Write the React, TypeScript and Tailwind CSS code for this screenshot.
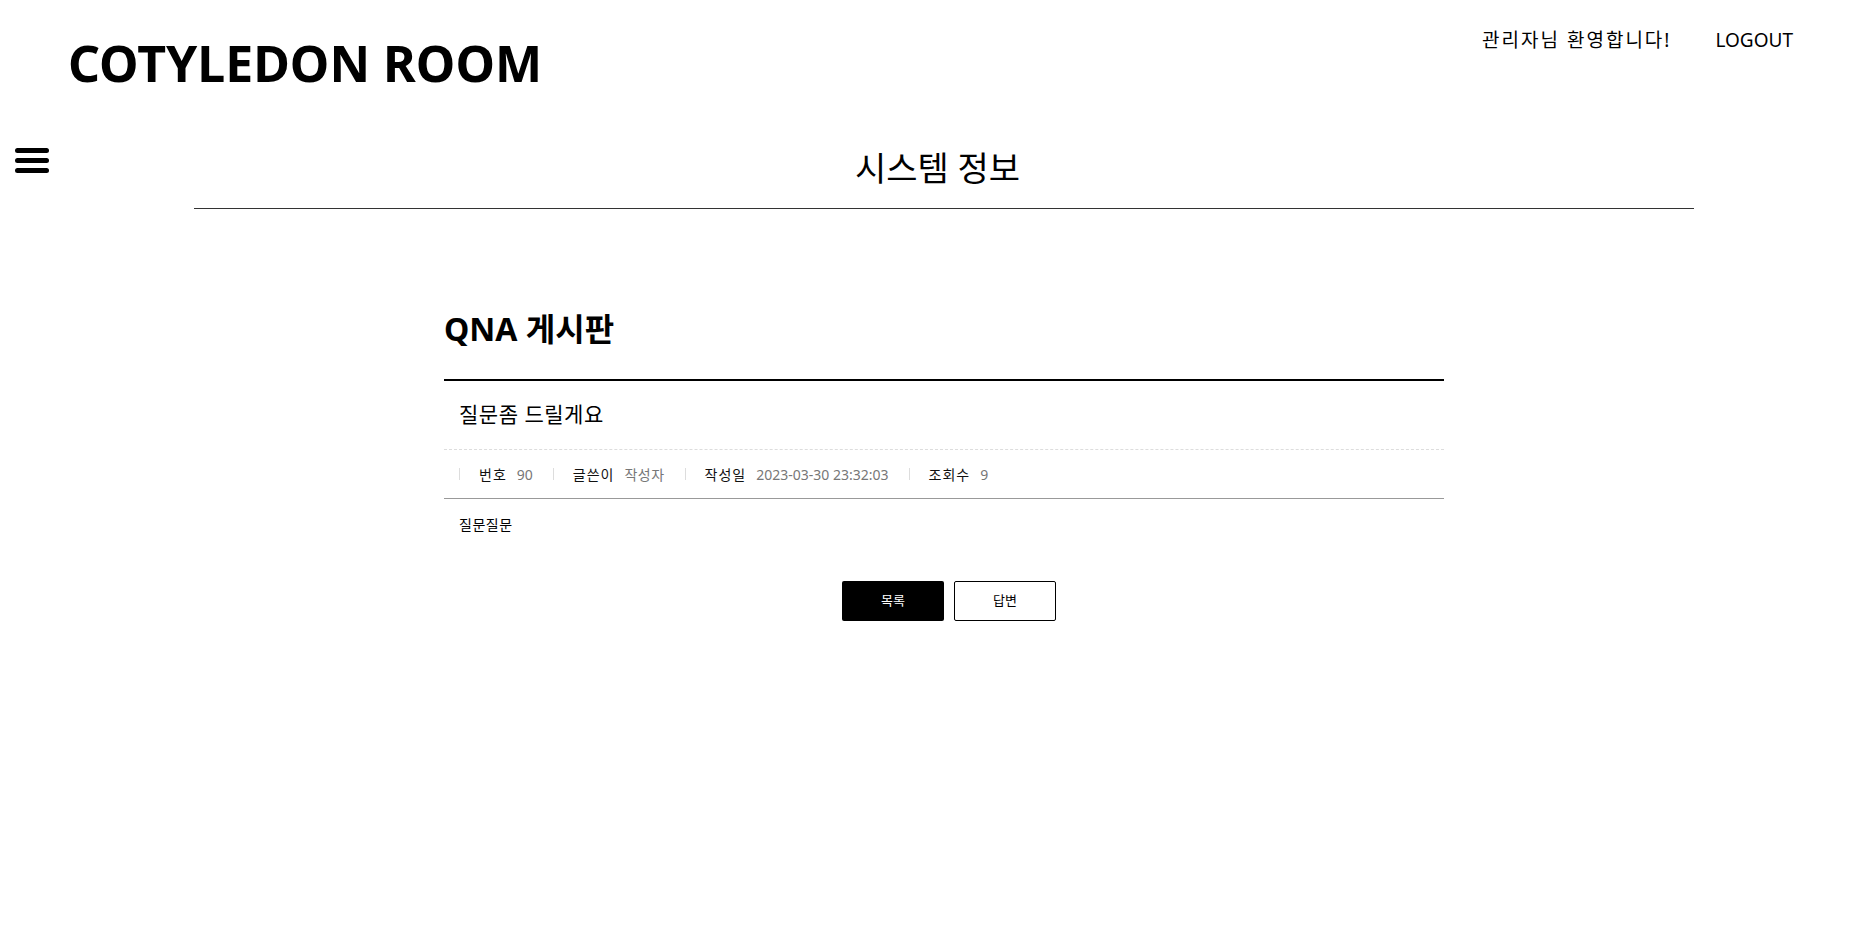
import React from 'react';

const MenuIcon = () => (
  <svg width="34" height="25" viewBox="0 0 34 25" fill="#000">
    <rect x="0" y="0" width="34" height="5" rx="2.5" />
    <rect x="0" y="10" width="34" height="5" rx="2.5" />
    <rect x="0" y="20" width="34" height="5" rx="2.5" />
  </svg>
);

const meta = [
  { label: '번호', value: '90', hangul: false },
  { label: '글쓴이', value: '작성자', hangul: true },
  { label: '작성일', value: '2023-03-30 23:32:03', hangul: false },
  { label: '조회수', value: '9', hangul: false },
];

const App = () => {
  return (
    <div className="min-h-screen bg-white text-black font-['Noto_Sans','Noto_Sans_CJK_KR',sans-serif]">
      {/* header */}
      <header className="flex items-start justify-between pl-[68px] pr-[82px]">
        <h1 className="pt-[38px] text-[50px] font-bold leading-none">COTYLEDON ROOM</h1>
        <div className="flex items-center gap-[44px] pt-[28px] text-[19px] leading-[24px]">
          <span className="tracking-[2px]">관리자님 환영합니다!</span>
          <a href="#">LOGOUT</a>
        </div>
      </header>

      {/* page title */}
      <div className="relative mt-[55px]">
        <button className="absolute left-[15px] top-[5px]">
          <MenuIcon />
        </button>
        <h2 className="text-center text-[34px] leading-[50px]">시스템 정보</h2>
        <div className="pl-[13px]">
          <div className="mx-auto mt-[15px] w-[1500px] border-t border-[#333]" />
        </div>
      </div>

      {/* board */}
      <div className="pl-[13px]">
        <div className="mx-auto mt-[100px] w-[1000px]">
          <h3 className="text-[32px] font-bold leading-[40px]">QNA 게시판</h3>
          <div className="mt-[30px] border-t-2 border-black">
            <div className="flex h-[69px] items-center border-b border-dashed border-[#ddd] px-[15px] text-[21px] tracking-[0.5px]">
              질문좀 드릴게요
            </div>
            <div className="flex h-[49px] items-center border-b border-[#999] px-[15px] text-[14px]">
              {meta.map((m) => (
                <div key={m.label} className="mr-[20px] flex items-center">
                  <span className="h-[12px] border-l border-[#ddd]" />
                  <span className="pl-[19px] tracking-[1px] text-[#111]">{m.label}</span>
                  <span className={m.hangul ? 'pl-[10px] tracking-[0.5px] text-[#777]' : 'pl-[10px] text-[#777]'}>
                    {m.value}
                  </span>
                </div>
              ))}
            </div>
            <div className="px-[15px] pt-[16px] text-[14px] leading-[20px] tracking-[0.5px]">질문질문</div>
          </div>
          <div className="mt-[46px] flex justify-center gap-[10px] pl-[10px]">
            <button className="h-[40px] w-[102px] rounded-[2px] bg-black text-[13px] text-white">목록</button>
            <button className="h-[40px] w-[102px] rounded-[2px] border border-black bg-white text-[13px]">답변</button>
          </div>
        </div>
      </div>
    </div>
  );
};

export default App;
